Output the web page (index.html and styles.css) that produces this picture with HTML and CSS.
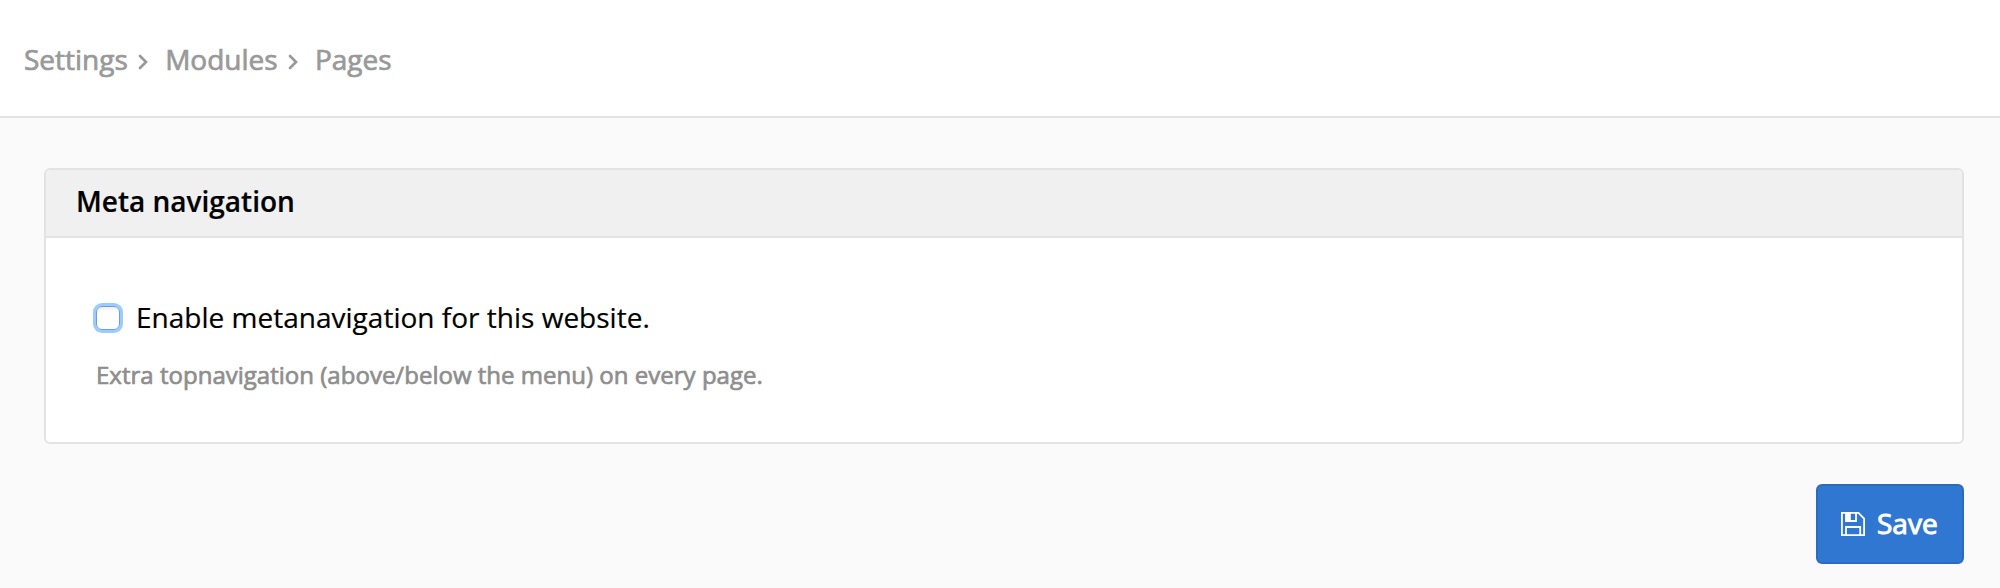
FILE: index.html
```html
<!DOCTYPE html>
<html lang="en">
<head>
<meta charset="utf-8">
<title>Pages - Modules - Settings</title>
<link rel="stylesheet" href="styles.css">
</head>
<body>
<nav class="breadcrumb">
  <span class="crumb">Settings</span>
  <svg class="chevron" viewBox="0 0 10 16"><path d="M2 2l6 6-6 6"/></svg>
  <span class="crumb">Modules</span>
  <svg class="chevron" viewBox="0 0 10 16"><path d="M2 2l6 6-6 6"/></svg>
  <span class="crumb">Pages</span>
</nav>
<main class="content">
  <section class="panel">
    <h2 class="panel-title">Meta navigation</h2>
    <div class="panel-body">
      <label class="option"><input class="checkbox" type="checkbox"><span class="option-text">Enable metanavigation for this website.</span></label>
      <p class="help">Extra topnavigation (above/below the menu) on every page.</p>
    </div>
  </section>
  <div class="actions">
    <button class="save" type="button">
      <svg class="save-icon" viewBox="0 0 24 24"><path d="M.9.9H17.5L23.1 6.5V23.1H.9ZM5 23V15H19.2V23M5 1V9H15V1"/><path class="fill" d="M5 1h4.8v8H5z"/></svg>
      <span class="save-text">Save</span>
    </button>
  </div>
</main>
</body>
</html>
```
FILE: styles.css
```css
* { box-sizing: border-box; }
body {
  margin: 0;
  min-height: 588px;
  background: #fafafa;
  color: #000;
  font: 28px/38px "Open Sans", sans-serif;
}
.breadcrumb {
  display: flex;
  height: 118px;
  padding: 40px 24px 0;
  background: #fff;
  border-bottom: 2px solid #e3e3e3;
  color: #999;
  -webkit-text-stroke: 0.7px #999;
}
.chevron {
  width: 10px;
  height: 16px;
  margin: 14px 17.3px 0 10px;
  fill: none;
  stroke: #999;
  stroke-width: 2.7;
  stroke-linecap: round;
}
.content { padding: 50px 36px 0 44px; }
.panel {
  height: 276px;
  border: 2px solid #e3e3e3;
  border-radius: 6px;
  background: #fff;
  overflow: hidden;
}
.panel-title {
  height: 68px;
  margin: 0;
  padding: 12px 30px 0;
  background: #f0f0f0;
  border-bottom: 2px solid #e3e3e3;
  font-size: 28px;
  font-weight: 600;
  -webkit-text-stroke: 0.2px #000;
}
.panel-body { padding: 60px 50px 0; }
.option { display: flex; -webkit-text-stroke: 0.2px #000; }
.option-text { letter-spacing: 0.01px; }
.checkbox {
  appearance: none;
  width: 24px;
  height: 24px;
  margin: 8px 16px 0 0;
  border: 1px solid #6b9ed8;
  border-radius: 6px;
  background: linear-gradient(#f0f0f0, #fff 5px);
  box-shadow: 0 0 0 3px #9dcaff;
}
.help {
  margin: 22px 0 0;
  color: #8e8e8e;
  font-size: 24px;
  line-height: 33px;
  letter-spacing: 0.015px;
  -webkit-text-stroke: 0.7px #8e8e8e;
}
.actions {
  display: flex;
  justify-content: flex-end;
  padding-top: 40px;
}
.save {
  display: flex;
  width: 148px;
  height: 80px;
  padding: 18px 0 0 23px;
  border: 2px solid #2a6bbd;
  border-radius: 6px;
  background: #3077d1;
  color: #fff;
  font: inherit;
  -webkit-text-stroke: 1px #fff;
}
.save-icon {
  width: 24px;
  height: 24px;
  margin: 8px 12px 0 0;
  fill: none;
  stroke: #fff;
  stroke-width: 1.8;
}
.save-icon .fill { fill: #fff; stroke: none; }
```
